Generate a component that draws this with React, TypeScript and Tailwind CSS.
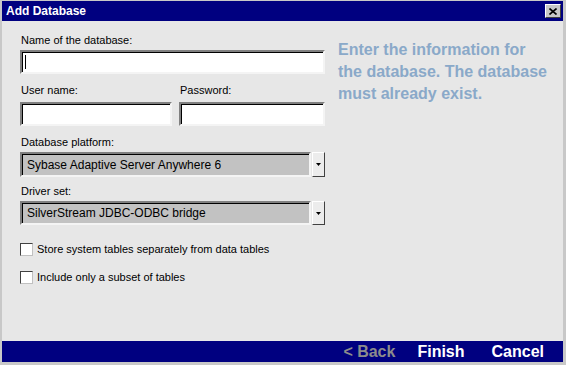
import React from 'react';

const font = { fontFamily: '"Liberation Sans", Arial, sans-serif' };

const sunken =
  'border-2 border-t-[#808080] border-l-[#808080] border-b-[#f4f4f4] border-r-[#f4f4f4] shadow-[inset_1px_1px_0_#000000]';

const Label: React.FC<{ text: string; className?: string }> = ({ text, className = '' }) => (
  <div className={`h-[13px] text-[11px] leading-[13px] text-black ${className}`}>{text}</div>
);

const TextField: React.FC<{ className?: string; caret?: boolean }> = ({ className = '', caret }) => (
  <div className={`bg-white ${sunken} flex items-center pl-[3px] ${className}`}>
    {caret && <div className="w-px h-[14px] bg-black" />}
  </div>
);

const Select: React.FC<{ value: string; className?: string }> = ({ value, className = '' }) => (
  <div className={`flex w-[305px] ${className}`}>
    <div className={`flex-1 bg-[#c2c2c2] ${sunken} flex items-center pl-[5px] text-[12px] text-black`}>
      {value}
    </div>
    <div className="w-[13px] ml-px bg-[#ececec] border border-t-white border-l-white border-b-[#404040] border-r-[#404040] flex items-center justify-center">
      <svg width="5" height="3" viewBox="0 0 5 3">
        <path d="M0 0H5L2.5 3Z" fill="#000" />
      </svg>
    </div>
  </div>
);

const Checkbox: React.FC<{ text: string; className?: string }> = ({ text, className = '' }) => (
  <div className={`flex items-center h-[13px] ${className}`}>
    <div className="w-[13px] h-[13px] bg-white border border-t-[#404040] border-l-[#404040] border-b-[#c0c0c0] border-r-[#c0c0c0]" />
    <span className="ml-[4px] text-[11px] leading-[13px] text-black">{text}</span>
  </div>
);

export default function App() {
  return (
    <div
      style={font}
      className="w-[566px] h-[365px] bg-[#c8c8c8] pt-px pl-[2px] pr-[3px] pb-[3px] flex flex-col"
    >
      {/* Title bar */}
      <div className="h-[20px] bg-[#000080] flex items-center justify-between pl-[4px] pr-[2px]">
        <span className="text-white font-bold text-[12px] leading-none">Add Database</span>
        <div className="w-[16px] h-[14px] bg-[#c8c8c8] border border-t-white border-l-white border-b-[#404040] border-r-[#404040] flex items-center justify-center">
          <svg width="8" height="7" viewBox="0 0 8 7">
            <path d="M0.5 0.5L7.5 6.5M7.5 0.5L0.5 6.5" stroke="#000" strokeWidth="1.6" />
          </svg>
        </div>
      </div>

      {/* Body */}
      <div className="flex-1 bg-[#e7e7e7] flex pl-[18px] pt-[13px]">
        <div className="w-[305px] flex flex-col">
          <Label text="Name of the database:" className="pl-px" />
          <TextField className="mt-[3px] h-[24px] w-[305px]" caret />

          <div className="flex mt-[10px] gap-[7px]">
            <div className="flex flex-col">
              <Label text="User name:" className="pl-px" />
              <TextField className="mt-[5px] h-[24px] w-[152px]" />
            </div>
            <div className="flex flex-col">
              <Label text="Password:" className="pl-px" />
              <TextField className="mt-[5px] h-[24px] w-[146px]" />
            </div>
          </div>

          <Label text="Database platform:" className="mt-[10px] pl-px" />
          <Select value="Sybase Adaptive Server Anywhere 6" className="mt-[3px] h-[25px]" />

          <Label text="Driver set:" className="mt-[8px] pl-px" />
          <Select value="SilverStream JDBC-ODBC bridge" className="mt-[3px] h-[24px]" />

          <Checkbox text="Store system tables separately from data tables" className="mt-[18px]" />
          <Checkbox text="Include only a subset of tables" className="mt-[15px]" />
        </div>

        <div className="ml-[13px] pt-[5px] text-[16px] leading-[22px] font-bold text-[#8aa9c9]">
          Enter the information for
          <br />
          the database. The database
          <br />
          must already exist.
        </div>
      </div>

      {/* Wizard buttons */}
      <div className="h-[21px] bg-[#000080] flex items-center justify-end pr-[19px] text-[16px] font-bold leading-none">
        <span className="text-[#8c8c8c]">&lt; Back</span>
        <span className="text-white ml-[22px]">Finish</span>
        <span className="text-white ml-[27px]">Cancel</span>
      </div>
    </div>
  );
}
